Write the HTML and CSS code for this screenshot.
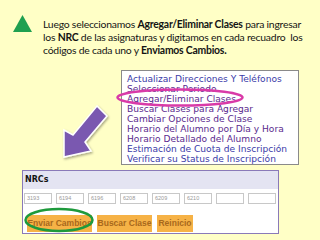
FILE: index.html
```html
<!DOCTYPE html>
<html lang="es">
<head>
<meta charset="utf-8">
<link rel="stylesheet" href="styles.css">
</head>
<body>
<div class="slide">
  <div class="intro">
    <svg class="bullet" width="19" height="17" viewBox="0 0 19 17"><polygon points="9.5,0 19,17 0,17" fill="#1fa050"/></svg>
    <p class="lead">Luego seleccionamos <b>Agregar/Eliminar Clases</b> para ingresar<br>los <b>NRC</b> de las asignaturas y digitamos en cada recuadro&nbsp; los<br>códigos de cada uno y <b>Enviamos Cambios.</b></p>
  </div>

  <ul class="menu">
    <li class="blue">Actualizar Direcciones Y Teléfonos</li>
    <li>Seleccionar Periodo</li>
    <li>Agregar/Eliminar Clases</li>
    <li>Buscar Clases para Agregar</li>
    <li>Cambiar Opciones de Clase</li>
    <li>Horario del Alumno por Día y Hora</li>
    <li>Horario Detallado del Alumno</li>
    <li class="blue">Estimación de Cuota de Inscripción</li>
    <li class="blue">Verificar su Status de Inscripción</li>
  </ul>

  <div class="panel">
    <div class="panel-head">NRCs</div>
    <div class="inputs">
      <span class="field">3193</span>
      <span class="field">6194</span>
      <span class="field">6196</span>
      <span class="field">6208</span>
      <span class="field">6209</span>
      <span class="field">6210</span>
      <span class="field"></span>
      <span class="field"></span>
    </div>
    <div class="buttons">
      <span class="btn b1">Enviar Cambios</span>
      <span class="btn b2">Buscar Clase</span>
      <span class="btn b3">Reinicio</span>
    </div>
  </div>

  <svg class="overlay" width="320" height="240" viewBox="0 0 320 240">
    <defs>
      <filter id="sh" x="-20%" y="-20%" width="140%" height="140%">
        <feDropShadow dx="1" dy="1.5" stdDeviation="1" flood-color="#000" flood-opacity="0.35"/>
      </filter>
    </defs>
    <polygon points="97,106 107,116 85,142 91,151 64,157 64,130 73,135" fill="#7a58b0" stroke="#fff" stroke-width="1.5" stroke-linejoin="miter" filter="url(#sh)"/>
    <ellipse cx="180" cy="97.5" rx="62.5" ry="8" fill="none" stroke="#d93aa8" stroke-width="2.5"/>
    <ellipse cx="59" cy="220" rx="33.5" ry="11" fill="none" stroke="#1e9a3c" stroke-width="2.5"/>
  </svg>
</div>
</body>
</html>
```

FILE: styles.css
```css
html, body {
  margin: 0;
  padding: 0;
}

body {
  width: 320px;
  height: 240px;
  overflow: hidden;
  background: #ffffc8;
}

.slide {
  position: relative;
  width: 320px;
  height: 240px;
  background: #ffffc6;
}

.intro {
  display: flex;
  align-items: flex-start;
  gap: 11px;
  padding: 18px 0 0 13px;
}

.bullet {
  flex: none;
  margin-top: -3px;
}

.lead {
  margin: 0;
  white-space: nowrap;
  font-family: Lato, "Liberation Sans", sans-serif;
  font-size: 10.4px;
  letter-spacing: -0.22px;
  line-height: 13px;
  color: #141414;
}

.lead b {
  font-weight: 700;
}

.menu {
  list-style: none;
  margin: 13px 0 0 121px;
  padding: 3px 0 0 5px;
  width: 171px;
  height: 90px;
  border: 1px solid #8a8a8a;
  background: #ffffff;
  font-family: "DejaVu Sans", Verdana, sans-serif;
  font-size: 9.1px;
  line-height: 10px;
  color: #5a2a8e;
  white-space: nowrap;
  overflow: hidden;
}

.menu .blue {
  color: #3a3aa8;
}

.panel {
  margin: 5px 0 0 22px;
  width: 255px;
  height: 62px;
  border: 1px solid #8a7ab8;
  background: #ffffff;
}

.panel-head {
  height: 18px;
  line-height: 18px;
  padding-left: 2px;
  background: #e4e4f2;
  font-family: "DejaVu Sans", Verdana, sans-serif;
  font-size: 8px;
  font-weight: 700;
  color: #141414;
}

.inputs {
  display: flex;
  gap: 4px;
  margin: 4px 0 0 1px;
}

.field {
  box-sizing: border-box;
  width: 28px;
  height: 11px;
  border: 1px solid #c8c8c8;
  font-family: "Liberation Sans", Arial, sans-serif;
  font-size: 5.5px;
  line-height: 9px;
  padding-left: 2px;
  color: #999;
}

.buttons {
  display: flex;
  gap: 5px;
  margin: 11px 0 0 4px;
}

.btn {
  height: 17px;
  line-height: 17px;
  text-align: center;
  background: #f6b246;
  font-family: "Liberation Sans", Arial, sans-serif;
  font-size: 8.5px;
  font-weight: 700;
  color: #a8681c;
}

.b1 { width: 65px; }
.b2 { width: 55px; }
.b3 { width: 36px; }

.overlay {
  position: absolute;
  left: 0;
  top: 0;
  pointer-events: none;
}
```
